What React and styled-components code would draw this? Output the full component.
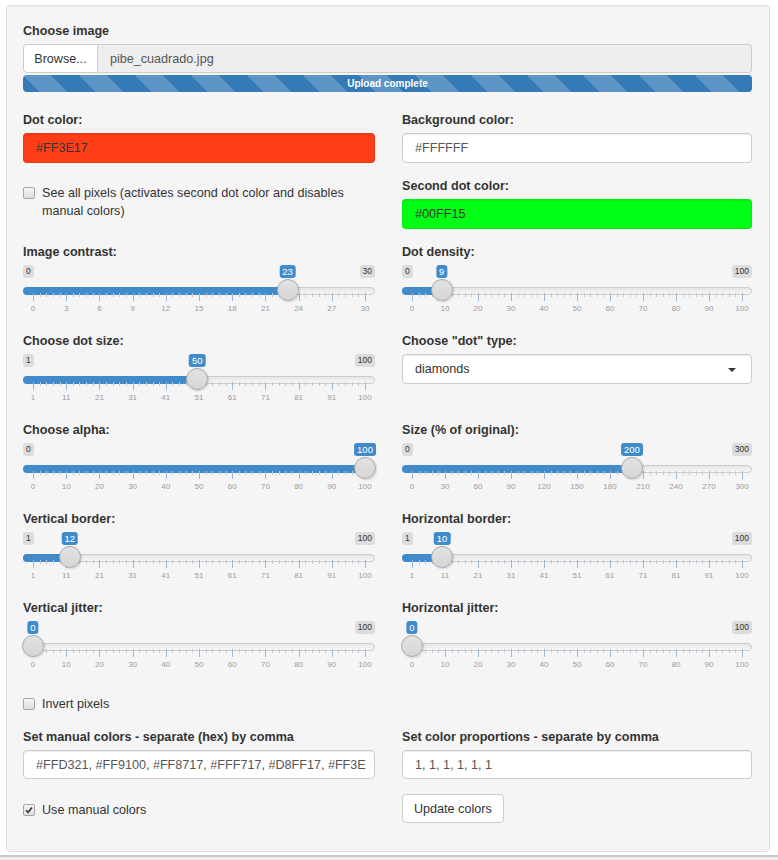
import React from "react"
import styled, { createGlobalStyle } from "styled-components"

const GlobalStyle = createGlobalStyle`
  html, body {
    margin: 0;
    padding: 0;
    background: #fff;
  }
  body {
    font-family: "Liberation Sans", Arial, sans-serif;
    font-size: 12.6px;
    color: #333;
  }
  * { box-sizing: border-box; }
`

const Page = styled.div`
  width: 778px;
  height: 860px;
  padding: 5px 0 0 6px;
  overflow: hidden;
`

const Well = styled.div`
  width: 764px;
  height: 847px;
  background: #f5f5f5;
  border: 1px solid #e3e3e3;
  border-radius: 4px;
  box-shadow: inset 0 1px 1px rgba(0, 0, 0, 0.05);
  padding: 15px 17px 0 16px;
`

const Footer = styled.div`
  margin: 3px 0 0 -6px;
  width: 778px;
  height: 10px;
  border-top: 2px solid #c9c9c9;
  background: #ebebeb;
`

const Row = styled.div`
  display: grid;
  grid-template-columns: 352px 1fr;
  column-gap: 27px;
  margin-top: ${p => p.$top || 0}px;
`

const Col = styled.div`
  display: flex;
  flex-direction: column;
  min-width: 0;
`

const Label = styled.div`
  font-weight: bold;
  font-size: 12.6px;
  line-height: 17px;
  padding-top: 2px;
  margin-bottom: 4px;
  margin-top: ${p => p.$top || 0}px;
`

const FileRow = styled.div`
  display: flex;
  height: 29px;
`

const BrowseButton = styled.div`
  width: 75px;
  background: #fff;
  border: 1px solid #ccc;
  border-radius: 4px 0 0 4px;
  display: flex;
  align-items: center;
  justify-content: center;
  color: #333;
`

const FileName = styled.div`
  flex: 1;
  background: #eee;
  border: 1px solid #ccc;
  border-left: none;
  border-radius: 0 4px 4px 0;
  display: flex;
  align-items: center;
  padding-left: 12px;
  color: #555;
`

const Progress = styled.div`
  margin-top: 2px;
  height: 17px;
  border-radius: 4px;
  background-color: #337ab7;
  background-image: linear-gradient(
    45deg,
    rgba(255, 255, 255, 0.2) 25%,
    transparent 25%,
    transparent 50%,
    rgba(255, 255, 255, 0.2) 50%,
    rgba(255, 255, 255, 0.2) 75%,
    transparent 75%,
    transparent
  );
  background-size: 56px 56px;
  color: #fff;
  font-size: 10px;
  font-weight: bold;
  line-height: 17px;
  text-align: center;
`

const TextInput = styled.div`
  height: ${p => p.$h || 30}px;
  background: ${p => p.$bg || "#fff"};
  border: 1px solid ${p => (p.$bg ? "rgba(0,0,0,0.08)" : "#ccc")};
  border-radius: 4px;
  display: flex;
  align-items: center;
  padding-left: 12px;
  color: ${p => (p.$bg ? "#333" : "#555")};
  white-space: nowrap;
  overflow: hidden;
  box-shadow: inset 0 1px 1px rgba(0, 0, 0, 0.075);
`

const Select = styled.div`
  position: relative;
  height: 30px;
  background: #fff;
  border: 1px solid #ccc;
  border-radius: 4px;
  display: flex;
  align-items: center;
  padding-left: 12px;
  color: #333;
  box-shadow: inset 0 1px 1px rgba(0, 0, 0, 0.075);

  &::after {
    content: "";
    position: absolute;
    right: 15px;
    top: 13px;
    border-style: solid;
    border-width: 4px 4px 0 4px;
    border-color: #333 transparent transparent transparent;
  }
`

const CheckRow = styled.div`
  display: flex;
  align-items: flex-start;
  gap: 7px;
  line-height: 18px;
  margin-top: ${p => p.$top || 0}px;
`

const Box = styled.span`
  flex: none;
  width: 12px;
  height: 12px;
  margin-top: 3px;
  border: 1px solid #a6a6a6;
  border-radius: 2px;
  background: linear-gradient(#f6f6f6, #dedede);
  display: flex;
  align-items: center;
  justify-content: center;
`

const Button = styled.div`
  align-self: flex-start;
  margin-top: 15px;
  height: 29px;
  padding: 0 11px;
  background: #fff;
  border: 1px solid #ccc;
  border-radius: 4px;
  display: flex;
  align-items: center;
  color: #333;
`

/* ion.rangeSlider ("shiny" skin) */
const Irs = styled.div`
  position: relative;
  height: 50px;
  margin-bottom: 16px;
`

const pos = f => `calc(10px + (100% - 20px) * ${f})`

const Line = styled.div`
  position: absolute;
  left: 0;
  right: 0;
  top: 22px;
  height: 8px;
  border: 1px solid #ccc;
  border-radius: 16px;
  background: linear-gradient(to bottom, #ddd -50%, #fff 150%);
`

const Bar = styled.div`
  position: absolute;
  left: 0;
  top: 22px;
  height: 8px;
  width: ${p => pos(p.$f)};
  background: #428bca;
  border-radius: 16px 0 0 16px;
`

const Handle = styled.div`
  position: absolute;
  top: 14px;
  left: ${p => pos(p.$f)};
  width: 22px;
  height: 22px;
  margin-left: -11px;
  border-radius: 50%;
  border: 1px solid #aaa;
  background: linear-gradient(to bottom, #e2e2e2, #d6d6d6);
  box-shadow: 1px 1px 2px rgba(0, 0, 0, 0.15);
`

const Edge = styled.span`
  position: absolute;
  top: 0;
  ${p => (p.$right ? "right: 0;" : "left: 0;")}
  font-size: 8.5px;
  line-height: 11px;
  padding: 1px 3px;
  border-radius: 3px;
  background: rgba(0, 0, 0, 0.1);
  color: #333;
`

const Single = styled.span`
  position: absolute;
  top: 0;
  left: ${p => pos(p.$f)};
  transform: translateX(-50%);
  font-size: 9.5px;
  line-height: 11px;
  padding: 1px 3px;
  border-radius: 3px;
  background: #428bca;
  color: #fff;
`

const Tick = styled.span`
  position: absolute;
  top: 28px;
  left: ${p => pos(p.$f)};
  width: 1px;
  height: ${p => (p.$major ? 8 : 4)}px;
  background: ${p => (p.$major ? "#9db8d2" : "#bccbd9")};
`

const GridText = styled.span`
  position: absolute;
  top: 39px;
  left: ${p => pos(p.$f)};
  transform: translateX(-50%);
  font-size: 8px;
  line-height: 10px;
  color: #9c9c9c;
`

function Slider({ min, max, value, grid }) {
  const f = (value - min) / (max - min)
  const ticks = []
  for (let i = 0; i <= 50; i++) ticks.push(i)
  return (
    <Irs>
      <Line />
      <Bar $f={f} />
      {ticks.map(i => <Tick key={i} $f={i / 50} $major={i % 5 === 0} />)}
      {grid.map((g, i) => <GridText key={i} $f={i / 10}>{g}</GridText>)}
      {f > 0.06 && <Edge>{min}</Edge>}
      {f < 0.94 && <Edge $right>{max}</Edge>}
      <Single $f={f}>{value}</Single>
      <Handle $f={f} />
    </Irs>
  )
}

function Check({ checked, top, children }) {
  return (
    <CheckRow $top={top}>
      <Box>
        {checked && (
          <svg width="8" height="8" viewBox="0 0 8 8">
            <path d="M1 4.2 L3.1 6.3 L7 1.4" fill="none" stroke="#333" strokeWidth="1.6" />
          </svg>
        )}
      </Box>
      <span>{children}</span>
    </CheckRow>
  )
}

const tens = (a, step) => Array.from({ length: 11 }, (_, i) => a + i * step)
const g100 = tens(0, 10)
const g1 = [1, 11, 21, 31, 41, 51, 61, 71, 81, 91, 100]

export default function App() {
  return (
    <>
      <GlobalStyle />
      <Page>
        <Well>
          <Label>Choose image</Label>
          <FileRow>
            <BrowseButton>Browse...</BrowseButton>
            <FileName>pibe_cuadrado.jpg</FileName>
          </FileRow>
          <Progress>Upload complete</Progress>

          <Row $top={18}>
            <Col>
              <Label>Dot color:</Label>
              <TextInput $bg="#FF3E17">#FF3E17</TextInput>
              <Check top={21}>See all pixels (activates second dot color and disables manual colors)</Check>
            </Col>
            <Col>
              <Label>Background color:</Label>
              <TextInput>#FFFFFF</TextInput>
              <Label $top={13}>Second dot color:</Label>
              <TextInput $bg="#00FF15">#00FF15</TextInput>
            </Col>
          </Row>

          <Row $top={13}>
            <Col>
              <Label>Image contrast:</Label>
              <Slider min={0} max={30} value={23} grid={tens(0, 3)} />
            </Col>
            <Col>
              <Label>Dot density:</Label>
              <Slider min={0} max={100} value={9} grid={g100} />
            </Col>
          </Row>

          <Row>
            <Col>
              <Label>Choose dot size:</Label>
              <Slider min={1} max={100} value={50} grid={g1} />
            </Col>
            <Col>
              <Label>Choose "dot" type:</Label>
              <Select>diamonds</Select>
            </Col>
          </Row>

          <Row>
            <Col>
              <Label>Choose alpha:</Label>
              <Slider min={0} max={100} value={100} grid={g100} />
            </Col>
            <Col>
              <Label>Size (% of original):</Label>
              <Slider min={0} max={300} value={200} grid={tens(0, 30)} />
            </Col>
          </Row>

          <Row>
            <Col>
              <Label>Vertical border:</Label>
              <Slider min={1} max={100} value={12} grid={g1} />
            </Col>
            <Col>
              <Label>Horizontal border:</Label>
              <Slider min={1} max={100} value={10} grid={g1} />
            </Col>
          </Row>

          <Row>
            <Col>
              <Label>Vertical jitter:</Label>
              <Slider min={0} max={100} value={0} grid={g100} />
            </Col>
            <Col>
              <Label>Horizontal jitter:</Label>
              <Slider min={0} max={100} value={0} grid={g100} />
            </Col>
          </Row>

          <Row>
            <Col>
              <Check top={8}>Invert pixels</Check>
            </Col>
          </Row>

          <Row $top={14}>
            <Col>
              <Label>Set manual colors - separate (hex) by comma</Label>
              <TextInput $h={29}>#FFD321, #FF9100, #FF8717, #FFF717, #D8FF17, #FF3E</TextInput>
              <Check checked top={22}>Use manual colors</Check>
            </Col>
            <Col>
              <Label>Set color proportions - separate by comma</Label>
              <TextInput $h={29}>1, 1, 1, 1, 1, 1</TextInput>
              <Button>Update colors</Button>
            </Col>
          </Row>
        </Well>
        <Footer />
      </Page>
    </>
  )
}
